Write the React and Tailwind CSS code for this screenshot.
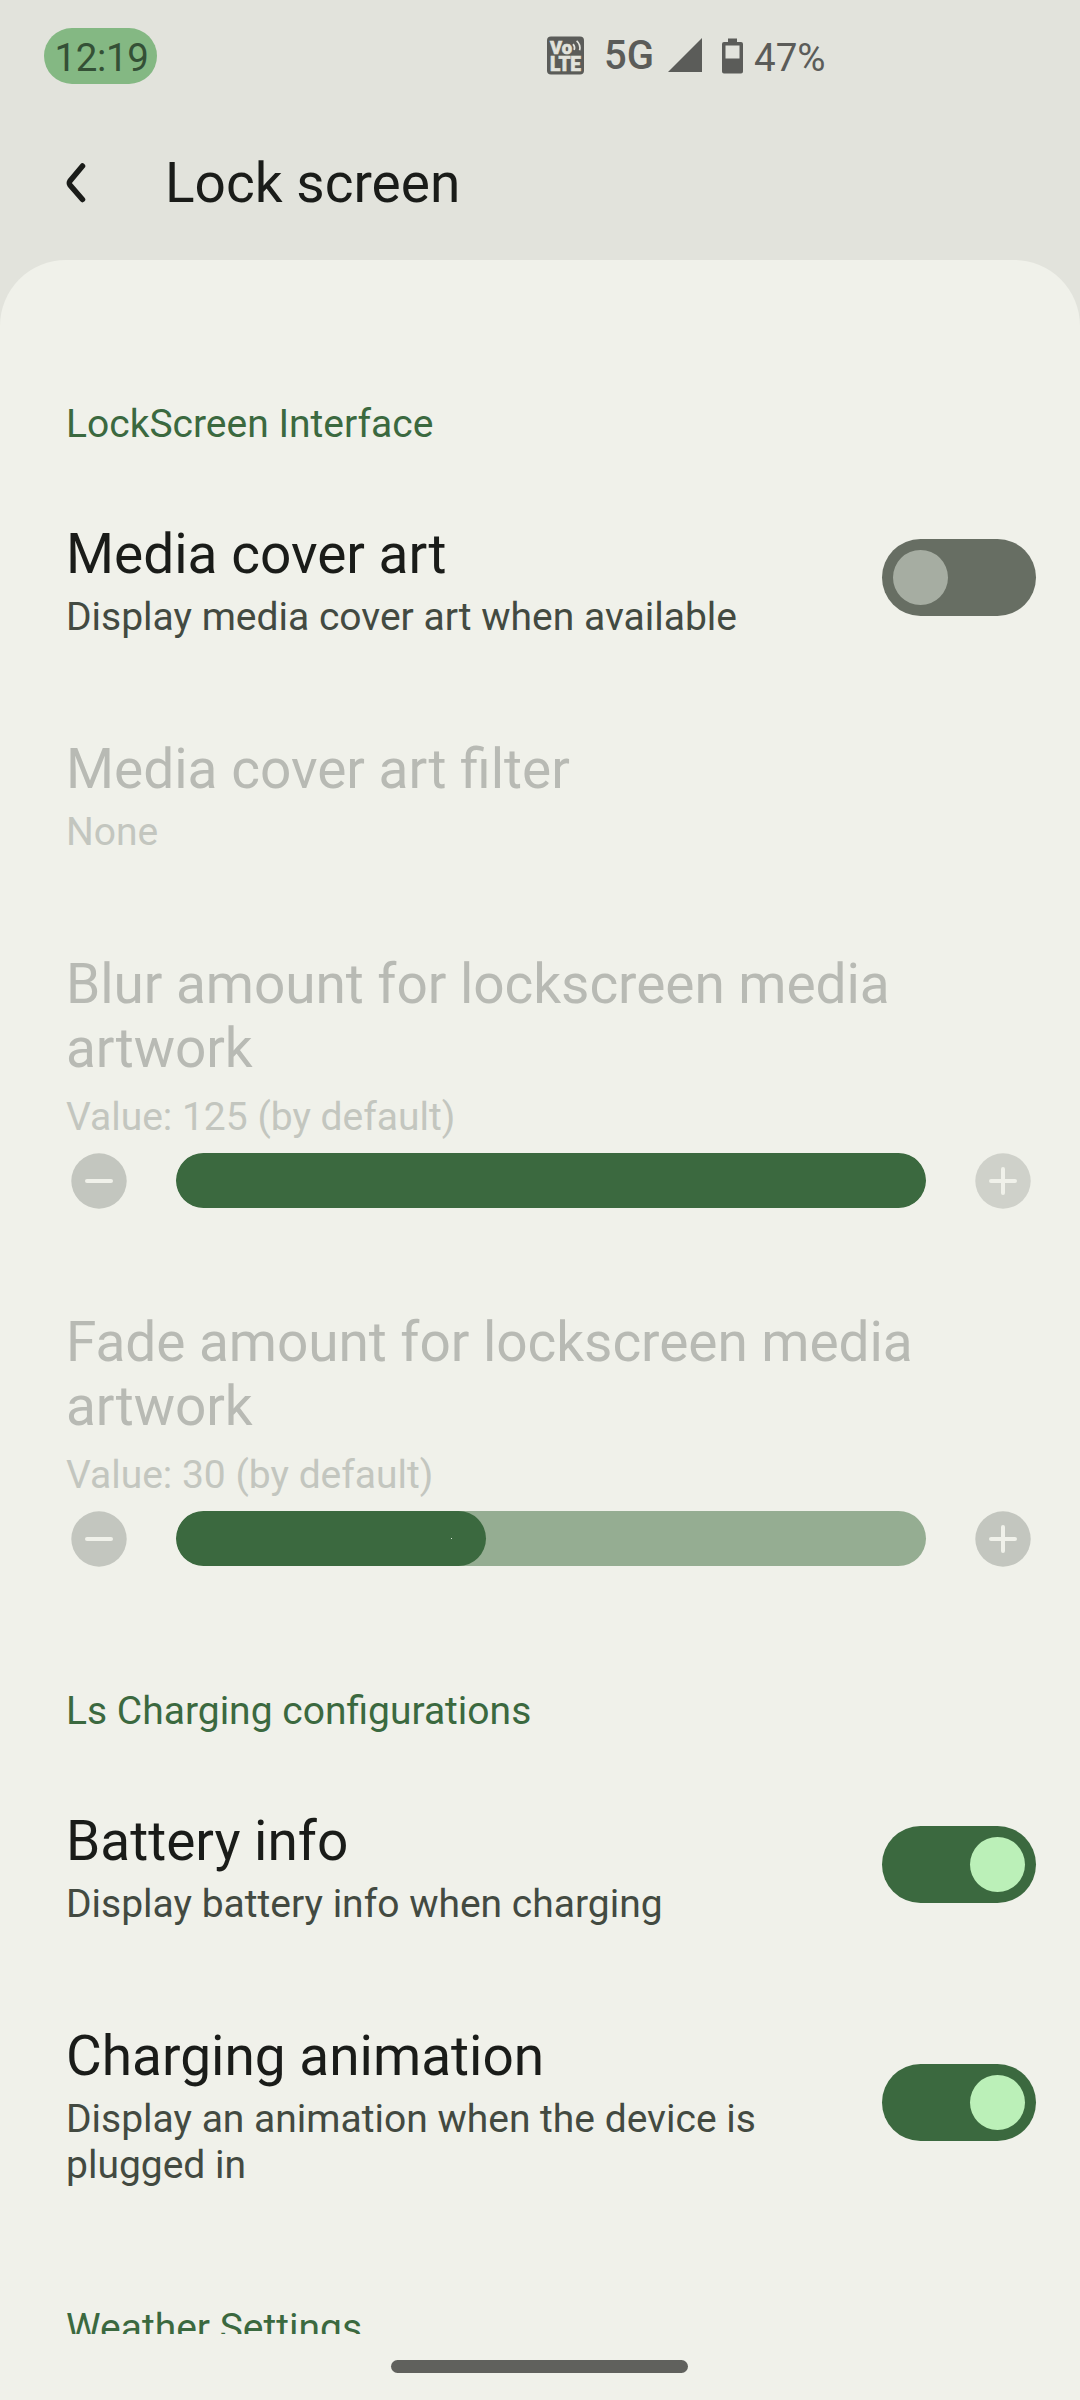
import { useState } from "react";

const StatusBar = () => (
  <div className="flex h-[112px] items-start pt-7 pl-11 text-[38.5px] leading-[56px] text-[#5b5c59]">
    <div className="flex h-14 w-[113px] items-center justify-center rounded-[28px] bg-[#84b883] text-[#345036]">
      <span className="pt-[3px] pl-[2px] tracking-[-0.4px]">12:19</span>
    </div>

    {/* VoLTE badge */}
    <svg className="mt-[8px] ml-[390px] h-[39px] w-[37px] shrink-0" viewBox="0 0 37 39">
      <rect x="0" y="0.5" width="37" height="38" rx="4" fill="#5b5c59" />
      <g fill="#e2e3dc" stroke="#e2e3dc" strokeWidth="0.6" fontFamily="Roboto, sans-serif" fontWeight="900">
        <text x="3" y="18" fontSize="18.5" textLength="22" lengthAdjust="spacingAndGlyphs">Vo</text>
        <text x="3" y="35.2" fontSize="20" textLength="31" lengthAdjust="spacingAndGlyphs">LTE</text>
      </g>
      <path d="M26 8.2q2.4 2.6 1.2 5.8M29.6 4.8q4.4 3.8 3 9.4" fill="none" stroke="#e2e3dc" strokeWidth="1.7" />
    </svg>

    <span className="ml-[20px] w-[52px] text-[40px] font-medium leading-[55px]">5G</span>

    <svg className="mt-[10px] ml-[12px] h-[34px] w-[34px] shrink-0" viewBox="0 0 34 34">
      <path d="M34 0V34H0Z" fill="#5b5c59" />
    </svg>

    <svg className="mt-[10px] ml-[20px] h-[36px] w-[21px] shrink-0" viewBox="0 0 21 36">
      <path
        d="M6 .5h9V4h4a2 2 0 0 1 2 2v27.500a2 2 0 0 1-2 2H2a2 2 0 0 1-2-2V6a2 2 0 0 1 2-2h4ZM3.500 7.500v13h14v-13Z"
        fill="#5b5c59"
        fillRule="evenodd"
      />
    </svg>

    <span className="ml-[11px] pt-[2px]">47%</span>
  </div>
);

const Toolbar = () => (
  <div className="flex h-[148px] items-start pl-[66px]">
    <svg className="mt-[51px] h-[40px] w-[20px]" viewBox="0 0 20 40">
      <path
        d="M16.500 3L4 18Q2.700 20 4 22L16.500 36.500"
        fill="none"
        stroke="#1a1c19"
        strokeWidth="5.500"
        strokeLinecap="round"
      />
    </svg>
    <h1 className="mt-[39px] ml-[79px] text-[55px] leading-[64px] text-[#1a1c19]">Lock screen</h1>
  </div>
);

const SectionTitle = ({ children }) => (
  <h2 className="h-[141px] shrink-0 pt-[72px] text-[39px] leading-[46px] text-[#3b693f]">{children}</h2>
);

const Toggle = ({ on, onChange }) => (
  <button
    type="button"
    role="switch"
    aria-checked={on}
    onClick={() => onChange(!on)}
    className={`flex h-[77px] w-[154px] shrink-0 rounded-full p-[11px] ${
      on ? "justify-end bg-[#3b693f]" : "justify-start bg-[#676e63]"
    }`}
  >
    <span className={`size-[55px] rounded-full ${on ? "bg-[#bbf0b8]" : "bg-[#a6ada2]"}`} />
  </button>
);

const Preference = ({ title, summary, disabled, children }) => (
  <div className="flex shrink-0 items-center justify-between pr-[44px]">
    <div className="max-w-[740px] pt-[52px] pb-[45px]">
      <h3 className={`text-[55px] leading-[64px] ${disabled ? "text-[#b8bab4]" : "text-[#1a1c19]"}`}>{title}</h3>
      <p className={`mt-[8px] text-[39px] leading-[46px] ${disabled ? "text-[#c3c6bf]" : "text-[#434a41]"}`}>
        {summary}
      </p>
    </div>
    {children}
  </div>
);

const StepButton = ({ plus, faded }) => (
  <button type="button" className="size-[56px] shrink-0">
    <svg viewBox="0 0 56 56" className="size-full">
      <circle cx="28" cy="28" r="27.700" fill={faded ? "#cfd1ca" : "#c3c6bf"} />
      <path
        d={plus ? "M16 28H40M28 16V40" : "M16 28H40"}
        stroke="#f0f1ea"
        strokeWidth="4"
        strokeLinecap="round"
      />
    </svg>
  </button>
);

const SliderPreference = ({ title, summary, percent }) => (
  <div className="h-[358px] shrink-0 pt-[52px]">
    <h3 className="w-[900px] text-[55px] leading-[64px] tracking-[-0.06px] text-[#b8bab4]">{title}</h3>
    <p className="mt-[14px] text-[39px] leading-[46px] text-[#c3c6bf]">{summary}</p>
    <div className="mt-[13px] flex h-[55px] items-center pl-[5px]">
      <StepButton />
      <div className="mr-[49px] ml-[49px] h-[55px] w-[750px] overflow-hidden rounded-full bg-[#95ad92]">
        <div
          className="flex h-full items-center justify-end rounded-full bg-[#3b693f] pr-[34px]"
          style={{ width: `${percent}%` }}
        >
          {percent < 100 && <span className="size-px bg-[#d5e3d2]" />}
        </div>
      </div>
      <StepButton plus faded={percent === 100} />
    </div>
  </div>
);

const App = () => {
  const [coverArt, setCoverArt] = useState(false);
  const [batteryInfo, setBatteryInfo] = useState(true);
  const [chargingAnimation, setChargingAnimation] = useState(true);

  return (
    <div className="flex h-[2400px] w-[1080px] flex-col overflow-hidden bg-[#e2e3dc] font-['Roboto',sans-serif]">
      <StatusBar />
      <Toolbar />

      <div className="flex min-h-0 flex-1 flex-col rounded-t-[66px] bg-[#f0f1ea]">
        <main className="flex h-[2074px] flex-col overflow-hidden pt-[69px] pl-[66px]">
          <SectionTitle>LockScreen Interface</SectionTitle>
          <Preference title="Media cover art" summary="Display media cover art when available">
            <Toggle on={coverArt} onChange={setCoverArt} />
          </Preference>
          <Preference title="Media cover art filter" summary="None" disabled />
          <SliderPreference
            title="Blur amount for lockscreen media artwork"
            summary="Value: 125 (by default)"
            percent={100}
          />
          <SliderPreference
            title="Fade amount for lockscreen media artwork"
            summary="Value: 30 (by default)"
            percent={41.33}
          />

          <SectionTitle>Ls Charging configurations</SectionTitle>
          <Preference title="Battery info" summary="Display battery info when charging">
            <Toggle on={batteryInfo} onChange={setBatteryInfo} />
          </Preference>
          <Preference
            title="Charging animation"
            summary="Display an animation when the device is plugged in"
          >
            <Toggle on={chargingAnimation} onChange={setChargingAnimation} />
          </Preference>

          <SectionTitle>Weather Settings</SectionTitle>
        </main>

        {/* Gesture navigation handle */}
        <div className="flex justify-center pt-[26px] pr-[2px]">
          <div className="h-[13px] w-[297px] rounded-full bg-[#60615d]" />
        </div>
      </div>
    </div>
  );
};

export default App;
